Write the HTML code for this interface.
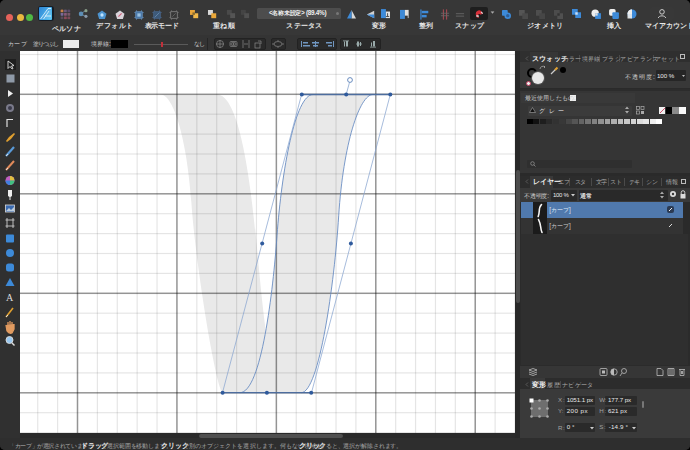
<!DOCTYPE html>
<html><head><meta charset="utf-8">
<style>
*{margin:0;padding:0;box-sizing:border-box}
html,body{width:690px;height:450px;overflow:hidden;background:#000}
body{position:relative;font-family:"Liberation Sans",sans-serif;color:#ddd}
.abs{position:absolute}
#win{position:absolute;left:0;top:0;width:690px;height:450px;background:#2d2d2d;border-radius:5px;overflow:hidden}
#tb{left:0;top:0;width:690px;height:35px;background:#373737}
#ctx{left:0;top:35px;width:690px;height:16px;background:#343434}
#lt{left:0;top:51px;width:20px;height:387px;background:#303030}
#canvas{left:20px;top:51px;width:495px;height:382px;background:#fff;overflow:hidden}
#status{left:0;top:438px;width:690px;height:12px;background:#2e2e2e}
#rp{left:515px;top:51px;width:175px;height:388px;background:#2a2a2a}
.mn{fill:rgba(0,0,0,0.1)}
.mj{fill:rgba(0,0,0,0.42)}
.sm{font-size:5.8px;color:#d8d8d8;white-space:nowrap;margin-top:1px}
.grp{background:#2a2a2a;border:0.5px solid #222;border-radius:2px}
.tab{font-size:6.2px;color:#9a9a9a;white-space:nowrap}
.fld{height:9px;background:#2a2a2a;border-radius:1px;font-size:6px;color:#e8e8e8;padding-left:2px;line-height:9px;white-space:nowrap;overflow:hidden}
.st{font-size:5.75px;color:#b0b0b0;white-space:nowrap}
.st b{color:#f0f0f0}
.ic{transform:scale(.82)}
.tx{position:absolute;line-height:1;white-space:nowrap}
.lbl{position:absolute;font-size:6.2px;font-weight:bold;color:#e8e8e8;white-space:nowrap;transform:translateX(-50%)}
</style></head><body>
<div id="win">
  <div id="tb" class="abs">
    <div class="abs" style="left:6px;top:13.5px;width:7px;height:7px;border-radius:50%;background:#e5625a"></div>
    <div class="abs" style="left:16.5px;top:13.5px;width:7px;height:7px;border-radius:50%;background:#e9b73f"></div>
    <div class="abs" style="left:26.3px;top:13.5px;width:7px;height:7px;border-radius:50%;background:#4fb845"></div>
    <div class="abs" style="left:37.5px;top:5.7px;width:16px;height:15.5px;border-radius:3px;background:#141c26"></div>
    <div class="abs" style="left:39px;top:7px;width:13.2px;height:13.2px;border-radius:1px;background:linear-gradient(120deg,#2f86d6,#56c4f2)"></div>
    <svg class="abs" style="left:39px;top:7px" width="13.2" height="13.2"><path d="M1.5,12 L9,1.5 H12 V12 Z" fill="rgba(255,255,255,0.12)"/><path d="M1.5,12 L9,1.5 M4.5,12 L10,4 M9,1.5 H12 M6,9 H12" stroke="#e8f6ff" stroke-width="0.8" fill="none"/></svg>
    <svg class="abs ic" style="left:59px;top:7.5px" width="13" height="13"><rect x="0.5" y="0.5" width="3.4" height="3.4" rx="0.6" fill="#c8804a"/><rect x="4.7" y="0.5" width="3.4" height="3.4" rx="0.6" fill="#6a5a7a"/><rect x="8.9" y="0.5" width="3.4" height="3.4" rx="0.6" fill="#5a4a6a"/><rect x="0.5" y="4.7" width="3.4" height="3.4" rx="0.6" fill="#7a6a9a"/><rect x="4.7" y="4.7" width="3.4" height="3.4" rx="0.6" fill="#8a5a7a"/><rect x="8.9" y="4.7" width="3.4" height="3.4" rx="0.6" fill="#7a5a6a"/><rect x="0.5" y="8.9" width="3.4" height="3.4" rx="0.6" fill="#5a4a5a"/><rect x="4.7" y="8.9" width="3.4" height="3.4" rx="0.6" fill="#8a4a5a"/><rect x="8.9" y="8.9" width="3.4" height="3.4" rx="0.6" fill="#7a4a5a"/></svg>
    <svg class="abs ic" style="left:77px;top:7px" width="13" height="13">
      <path d="M3,7 L9,3 M3,7 L9,10" stroke="#6a8aa0" stroke-width="1.2"/>
      <circle cx="3.5" cy="7" r="2.8" fill="#5d8eb5"/><circle cx="9.5" cy="3" r="1.9" fill="#8aa08a"/><circle cx="9.5" cy="10" r="1.9" fill="#8a9aaa"/>
    </svg>
    <svg class="abs ic" style="left:96px;top:9px" width="12" height="12">
      <path d="M6,0.5 L11.5,4.5 L9.5,11 L2.5,11 L0.5,4.5 Z" fill="#4d94cf"/><circle cx="6" cy="6" r="2" fill="#bfe3ff"/>
    </svg>
    <svg class="abs ic" style="left:114px;top:9px" width="12" height="12">
      <path d="M6,0.5 L11.5,4.5 L9.5,11 L2.5,11 L0.5,4.5 Z" fill="#d9d4da"/><path d="M4,8 L8,4" stroke="#d0607a" stroke-width="1.3"/>
    </svg>
    <svg class="abs ic" style="left:133px;top:9px" width="12" height="12">
      <rect x="2" y="2" width="8" height="8" fill="#4a78a8" stroke="#6a98c8" stroke-width="0.8"/><rect x="4" y="4" width="4" height="4" fill="#9ac0e0"/><path d="M0,3 H2 M10,3 H12 M0,9 H2 M10,9 H12 M3,0 V2 M9,0 V2 M3,10 V12 M9,10 V12" stroke="#6a98c8" stroke-width="0.7"/>
    </svg>
    <svg class="abs ic" style="left:151px;top:9px" width="12" height="12">
      <rect x="2" y="2" width="8" height="8" fill="#3d5a7a" stroke="#4a6a94" stroke-width="0.8"/><path d="M3,9 L9,3" stroke="#6a8ab0" stroke-width="1"/><path d="M0,3 H2 M10,3 H12 M0,9 H2 M10,9 H12 M3,0 V2 M9,0 V2 M3,10 V12 M9,10 V12" stroke="#4a6a94" stroke-width="0.7"/>
    </svg>
    <svg class="abs ic" style="left:168px;top:9px" width="12" height="12">
      <rect x="2" y="2" width="8" height="8" fill="none" stroke="#8a8a8a" stroke-width="0.9"/><path d="M0,3 H2 M10,3 H12 M0,9 H2 M10,9 H12 M3,0 V2 M9,0 V2 M3,10 V12 M9,10 V12" stroke="#777" stroke-width="0.7"/><path d="M4,8 L8,4" stroke="#777" stroke-width="0.8"/>
    </svg>
    <svg class="abs ic" style="left:188px;top:8px" width="13" height="13">
      <rect x="1" y="1" width="6" height="6" fill="#e9a53a"/><rect x="5" y="5" width="6" height="6" fill="#f0b84a"/><rect x="4" y="4" width="3" height="3" fill="#8a6a2a"/>
    </svg>
    <svg class="abs ic" style="left:206px;top:8px" width="13" height="13">
      <rect x="1" y="1" width="6" height="6" fill="#d8d8d8"/><rect x="5" y="5" width="6" height="6" fill="#eaa83a"/>
    </svg>
    <svg class="abs ic" style="left:225px;top:8px" width="12" height="12">
      <rect x="1" y="1" width="6" height="6" fill="#4a4a4a"/><rect x="5" y="5" width="6" height="6" fill="#555"/>
    </svg>
    <svg class="abs ic" style="left:239px;top:8px" width="12" height="12">
      <rect x="1" y="1" width="6" height="6" fill="#444"/><rect x="5" y="5" width="6" height="6" fill="#505050"/>
    </svg>
    <div class="abs" style="left:256.5px;top:7.6px;width:84px;height:11.6px;border-radius:1.5px;background:#4d4d4d"></div>
    <div class="abs" style="left:336px;top:12px;width:3px;height:3px;border-radius:50%;background:#777"></div>
    <svg class="abs ic" style="left:345px;top:8px" width="13" height="13"><path d="M6.5,1 L12,11.5 L6.5,11.5 Z" fill="#d8d8d8"/><path d="M6.5,1 L1,11.5 L6.5,11.5 Z" fill="#3d8ad8"/></svg>
    <svg class="abs ic" style="left:364px;top:8px" width="13" height="13"><path d="M11,2 L2,6.5 L11,11 Z" fill="#d0d0d0"/><path d="M11,6.5 L2,6.5 L11,11 Z" fill="#3d8ad8"/></svg>
    <svg class="abs ic" style="left:379px;top:7px" width="13" height="14"><rect x="1" y="1" width="6" height="11" fill="#3d8ad8"/><rect x="7" y="4" width="5" height="8" fill="#e0e0e0"/><path d="M9,6 v4 M7,10 h4" stroke="#333" stroke-width="1"/></svg>
    <svg class="abs ic" style="left:398px;top:7px" width="13" height="14"><rect x="1" y="2" width="6" height="11" fill="#3d8ad8"/><rect x="7" y="2" width="4" height="7" fill="#e0e0e0"/><path d="M11,2 V12" stroke="#ddd" stroke-width="1"/></svg>
    <svg class="abs ic" style="left:419px;top:8px" width="12" height="13"><path d="M1,0 V13" stroke="#3d8ad8" stroke-width="1.5"/><rect x="2" y="2" width="8" height="3" fill="#3d8ad8"/><rect x="2" y="7" width="6" height="3" fill="#3d8ad8"/></svg>
    <svg class="abs ic" style="left:439px;top:8px" width="12" height="13"><path d="M4,0 V13 M8,0 V13" stroke="#b04a55" stroke-width="1.2"/><path d="M1,5 H11 M1,8 H11" stroke="#6a6a6a" stroke-width="1"/></svg>
    <svg class="abs ic" style="left:454px;top:8px" width="12" height="13"><path d="M1,5.5 H11 M1,8.5 H11" stroke="#6a6a6a" stroke-width="1"/></svg>
    <div class="abs" style="left:470px;top:7px;width:18px;height:13px;border-radius:2px;background:#1e1e1e"></div>
    <svg class="abs ic" style="left:473px;top:8px" width="12" height="12"><path d="M3,10 L2,6 A4,4 0 0 1 9,3 L11,5 L8,7 A1.5,1.5 0 0 0 5,8 L6,11 Z" fill="#d6303a"/><path d="M9,3 L11,5 L10,6 L8,4 Z M2.5,7.5 L5.5,7.5 L6,9.5 L3,9.5 Z" fill="#ddd"/></svg>
    <svg class="abs ic" style="left:490px;top:11px" width="5" height="4"><path d="M0,0 H5 L2.5,3 Z" fill="#aaa"/></svg>
    <svg class="abs ic" style="left:500px;top:8px" width="13" height="13"><rect x="1" y="1" width="7" height="7" rx="1" fill="#3d8ad8"/><circle cx="8" cy="8" r="4" fill="#3d8ad8"/><circle cx="8" cy="8" r="2" fill="#2c5f9a"/></svg>
    <svg class="abs ic" style="left:516.5px;top:7.5px" width="13" height="13"><rect x="1" y="1" width="7" height="7" fill="#555"/><rect x="5" y="5" width="7" height="7" fill="#4a4a4a"/></svg>
    <svg class="abs ic" style="left:533.5px;top:7.5px" width="13" height="13"><rect x="1" y="1" width="7" height="7" fill="#4e4e4e"/><rect x="5" y="5" width="7" height="7" fill="#464646"/></svg>
    <svg class="abs ic" style="left:551.5px;top:7.5px" width="13" height="13"><rect x="1" y="1" width="7" height="7" fill="#4c4c4c"/><rect x="5" y="5" width="7" height="7" fill="#505050"/><rect x="5" y="5" width="3" height="3" fill="#333"/></svg>
    
    <svg class="abs ic" style="left:570px;top:7px" width="13" height="13"><rect x="1" y="1" width="7" height="7" fill="#3d8ad8"/><rect x="5" y="5" width="7" height="7" fill="#3d8ad8"/><rect x="5" y="5" width="3" height="3" fill="#c8e0f8"/></svg>
    <svg class="abs ic" style="left:589px;top:7px" width="14" height="14"><circle cx="6" cy="6" r="4.5" fill="#eee"/><rect x="6" y="6" width="7" height="7" fill="#3d8ad8"/><rect x="6" y="6" width="3" height="3" fill="#ddd"/></svg>
    <svg class="abs ic" style="left:607px;top:7px" width="14" height="14"><rect x="1" y="1" width="8" height="8" rx="2" fill="#eee"/><rect x="5" y="5" width="8" height="8" rx="1" fill="#3d8ad8"/></svg>
    <svg class="abs ic" style="left:625px;top:7px" width="14" height="14"><circle cx="7" cy="7" r="5.5" fill="#3d8ad8"/><path d="M7,7 V1.5 A5.5,5.5 0 0 0 1.5,7 Z" fill="#eee"/><path d="M7,1.5 A5.5,5.5 0 0 0 1.5,7 L1.5,12.5 L7,12.5 Z" fill="#eee" opacity="0.9"/></svg>
    <div class="abs" style="left:650px;top:7px;width:24px;height:13px;border-radius:2px;background:#383838"></div>
    <svg class="abs ic" style="left:656px;top:7px" width="12" height="13"><circle cx="6" cy="4.5" r="2.8" fill="none" stroke="#ddd" stroke-width="1.1"/><path d="M1.5,12 C2,8.5 10,8.5 10.5,12" fill="none" stroke="#ddd" stroke-width="1.1"/></svg>
  </div>
  <div id="ctx" class="abs">
    <div class="abs" style="left:62.5px;top:4.8px;width:16.5px;height:8px;background:#ececec"></div>
    <div class="abs" style="left:111px;top:4.8px;width:16.5px;height:8px;background:#000"></div>
    <div class="abs" style="left:133.5px;top:8.8px;width:54.5px;height:1px;background:#5a5a5a"></div>
    <div class="abs" style="left:161px;top:6.8px;width:1.5px;height:5px;background:#c0303a"></div>
    <div class="abs" style="left:207px;top:3.3px;width:1px;height:12px;background:#262626"></div>
    <div class="abs grp" style="left:214px;top:3.3px;width:52px;height:12px"></div>
    <div class="abs grp" style="left:271px;top:3.3px;width:15px;height:12px"></div>
    <div class="abs grp" style="left:297px;top:3.3px;width:40px;height:12px"></div>
    <div class="abs grp" style="left:340px;top:3.3px;width:41px;height:12px"></div>
    <svg class="abs" style="left:214px;top:3.3px" width="170" height="12">
      <g stroke="#8a8a8a" fill="none" stroke-width="0.7">
        <circle cx="6" cy="6" r="3.5"/><path d="M2,6 H10 M6,2 V10"/>
        <rect x="16" y="3.5" width="7" height="5" rx="1"/><circle cx="18.5" cy="6" r="1.5"/><circle cx="20.5" cy="6" r="1.5"/>
        <path d="M29,2 V10 M35,2 V10 M30,6 L34,6"/>
        <rect x="41" y="5" width="5" height="5"/><path d="M44,3 L47,3 L47,6"/>
        <ellipse cx="64" cy="6" rx="4" ry="2.5"/><path d="M58,6 h2 M68,6 h2 M64,2 v1 M64,9 v1"/>
      </g>
      <g fill="#7096c0">
        <rect x="87" y="3" width="1" height="6"/><rect x="89" y="4" width="5" height="1.5"/><rect x="89" y="7" width="7" height="1.5"/>
        <rect x="101" y="3" width="1" height="6"/><rect x="98" y="4" width="7" height="1.5"/><rect x="99" y="7" width="5" height="1.5"/>
        <rect x="119" y="3" width="1" height="6"/><rect x="112" y="4" width="6" height="1.5"/><rect x="114" y="7" width="4" height="1.5"/>
      </g>
      <g fill="#9aa">
        <rect x="130" y="3.5" width="1" height="5"/><rect x="132" y="3" width="2" height="5.5"/><rect x="129" y="2.5" width="6" height="0.8"/>
        <rect x="143" y="3.5" width="2" height="5"/><rect x="146" y="4" width="1" height="4"/><rect x="142" y="5.6" width="6" height="0.8"/>
        <rect x="157" y="4.5" width="1" height="4"/><rect x="159" y="3" width="2" height="5.5"/><rect x="156" y="8.7" width="6" height="0.8"/>
      </g>
    </svg>
  </div>
  <div id="lt" class="abs">
    <div class="abs" style="left:5px;top:8px;width:11px;height:11px;background:#1e1e1e"></div>
    <svg class="abs" style="left:0;top:0" width="20" height="387">
      <path d="M8,10 L8,17.5 L10,15.5 L12,18 L13,17.5 L11.5,15 L14,14.5 Z" fill="none" stroke="#ddd" stroke-width="0.9"/>
      <rect x="6.5" y="23.5" width="8" height="8" fill="#8f9aa8"/>
      <path d="M8,39 L8,46 L13,42.5 Z" fill="#eee"/>
      <circle cx="10" cy="57" r="4" fill="#7a7a8a"/><circle cx="10" cy="57" r="2" fill="#3a3a4a"/>
      <path d="M7,76 V68.5 H13" fill="none" stroke="#ddd" stroke-width="1.2"/>
      <path d="M6,90 L9,86 L14,82 L15,83 L11,88 L7,91 Z" fill="#e0a030"/>
      <path d="M6,105 L14,96" stroke="#5a9ad8" stroke-width="2.2"/><path d="M6,105 L8,103" stroke="#ddd" stroke-width="1"/>
      <path d="M6,119 L14,110" stroke="#e08a5a" stroke-width="2"/><path d="M6,119 L8,117" stroke="#ddd" stroke-width="1"/>
      <circle cx="10" cy="129.5" r="4.5" fill="#c060c0"/><path d="M10,129.5 L10,125 A4.5,4.5 0 0 1 14.5,129.5 Z" fill="#e0c040"/><path d="M10,129.5 L14.5,129.5 A4.5,4.5 0 0 1 10,134 Z" fill="#40c080"/><path d="M10,129.5 L10,134 A4.5,4.5 0 0 1 5.5,129.5 Z" fill="#4080e0"/>
      <path d="M8,139 H12 V145 L10.5,146 V149 H9.5 V146 L8,145 Z" fill="#eee"/>
      <rect x="5.5" y="154" width="9" height="7" fill="#3a6ab0" stroke="#ddd" stroke-width="0.8"/><path d="M6,160 L9,157 L11,159 L14,156 V160 Z" fill="#bcd"/>
      <path d="M7,167 V177 M13,167 V177 M5.5,169 H14.5 M5.5,175 H14.5" stroke="#ccc" stroke-width="0.9"/>
      <rect x="6" y="183.5" width="8" height="8" rx="1" fill="#3d8ad8"/>
      <circle cx="10" cy="202" r="4" fill="#3d8ad8"/>
      <rect x="6" y="212.5" width="8" height="8" rx="2.5" fill="#3d8ad8"/>
      <path d="M10,227 L14.5,235 H5.5 Z" fill="#3d8ad8"/>
      <text x="6" y="250" font-family="Liberation Serif" font-size="10" fill="#ddd">A</text>
      <path d="M6,266 L13,257" stroke="#e0a030" stroke-width="1.6"/><path d="M6,266 L8,264" stroke="#ddd" stroke-width="1"/>
      <path d="M6,274 L7,280 Q9,283 12,282 L14,278 L14,273 M8,276 V271 M10,276 V270 M12,276 V271" fill="#e09a60" stroke="#e09a60" stroke-width="1.3"/>
      <circle cx="9.5" cy="289" r="3.5" fill="#9ac8f0" stroke="#ddd" stroke-width="0.9"/><path d="M12,292 L14.5,294.5" stroke="#ddd" stroke-width="1.4"/>
    </svg>
  </div>
  <div id="canvas" class="abs">
    <svg width="495" height="382" viewBox="20 51 495 382" style="position:absolute;left:0;top:0">
      <g id="shapes" fill="#e9e9e9">
        <path d="M160.6,94.5 C174.1,94.5 187.3,142.3 191.3,201.5 C195.8,267.8 216.8,392.7 223.0,392.7 L285.0,392.7 C269.7,392.7 261.7,297.8 256.8,245.4 C251.2,186.4 240.2,94.5 217.0,94.5 Z"/>
        <path d="M313.0,94.5 C295.3,94.5 281.7,170.4 277.0,235.8 C273.1,289.8 261.6,392.7 239.8,392.7 L301.2,392.7 C319.2,392.7 334.4,283.8 338.7,215.8 C343.3,143.7 359.5,94.5 373.0,94.5 Z"/>
      </g>
      <g id="grid">
<rect x="37.13" y="51" width="1.2" height="382" class="mn"/>
<rect x="57.01" y="51" width="1.2" height="382" class="mn"/>
<rect x="76.75" y="51" width="1.5" height="382" class="mj"/>
<rect x="96.79" y="51" width="1.2" height="382" class="mn"/>
<rect x="116.67" y="51" width="1.2" height="382" class="mn"/>
<rect x="136.56" y="51" width="1.2" height="382" class="mn"/>
<rect x="156.44" y="51" width="1.2" height="382" class="mn"/>
<rect x="176.18" y="51" width="1.5" height="382" class="mj"/>
<rect x="196.22" y="51" width="1.2" height="382" class="mn"/>
<rect x="216.10" y="51" width="1.2" height="382" class="mn"/>
<rect x="235.99" y="51" width="1.2" height="382" class="mn"/>
<rect x="255.87" y="51" width="1.2" height="382" class="mn"/>
<rect x="275.61" y="51" width="1.5" height="382" class="mj"/>
<rect x="295.65" y="51" width="1.2" height="382" class="mn"/>
<rect x="315.53" y="51" width="1.2" height="382" class="mn"/>
<rect x="335.42" y="51" width="1.2" height="382" class="mn"/>
<rect x="355.30" y="51" width="1.2" height="382" class="mn"/>
<rect x="375.04" y="51" width="1.5" height="382" class="mj"/>
<rect x="395.08" y="51" width="1.2" height="382" class="mn"/>
<rect x="414.96" y="51" width="1.2" height="382" class="mn"/>
<rect x="434.85" y="51" width="1.2" height="382" class="mn"/>
<rect x="454.73" y="51" width="1.2" height="382" class="mn"/>
<rect x="474.47" y="51" width="1.5" height="382" class="mj"/>
<rect x="494.51" y="51" width="1.2" height="382" class="mn"/>
<rect x="514.39" y="51" width="1.2" height="382" class="mn"/>
<rect x="20" y="53.90" width="495" height="1.2" class="mn"/>
<rect x="20" y="73.80" width="495" height="1.2" class="mn"/>
<rect x="20" y="93.55" width="495" height="1.5" class="mj"/>
<rect x="20" y="113.60" width="495" height="1.2" class="mn"/>
<rect x="20" y="133.50" width="495" height="1.2" class="mn"/>
<rect x="20" y="153.40" width="495" height="1.2" class="mn"/>
<rect x="20" y="173.30" width="495" height="1.2" class="mn"/>
<rect x="20" y="193.05" width="495" height="1.5" class="mj"/>
<rect x="20" y="213.10" width="495" height="1.2" class="mn"/>
<rect x="20" y="233.00" width="495" height="1.2" class="mn"/>
<rect x="20" y="252.90" width="495" height="1.2" class="mn"/>
<rect x="20" y="272.80" width="495" height="1.2" class="mn"/>
<rect x="20" y="292.55" width="495" height="1.5" class="mj"/>
<rect x="20" y="312.60" width="495" height="1.2" class="mn"/>
<rect x="20" y="332.50" width="495" height="1.2" class="mn"/>
<rect x="20" y="352.40" width="495" height="1.2" class="mn"/>
<rect x="20" y="372.30" width="495" height="1.2" class="mn"/>
<rect x="20" y="392.05" width="495" height="1.5" class="mj"/>
<rect x="20" y="412.10" width="495" height="1.2" class="mn"/>
<rect x="20" y="432.00" width="495" height="1.2" class="mn"/>
</g>
      <g id="sel" fill="none" stroke="#6288c0" stroke-width="0.85">
        <path d="M313.0,94.5 C295.3,94.5 281.7,170.4 277.0,235.8 C273.1,289.8 261.6,392.7 239.8,392.7 M373.0,94.5 C359.5,94.5 343.3,143.7 338.7,215.8 C334.4,283.8 319.2,392.7 301.2,392.7"/>
        <path d="M301.6,94.5 L390.3,94.5 L311.5,392.7 L222.5,392.7 Z" stroke-width="0.75" stroke="#8aa6d0"/>
        <path d="M222.5,392.7 H311.5 M301.6,94.5 H390.3" stroke-width="1.3" stroke="#4d6d9e"/>
        <path d="M346.2,94.5 L349.5,82.4" stroke-width="0.6"/>
        <circle cx="350" cy="80" r="2.4" fill="#fff" stroke="#5a80b8" stroke-width="0.9"/>
      </g>
      <g fill="#2f5a9c">
        <circle cx="301.8" cy="94.5" r="2"/>
        <circle cx="346.2" cy="94.5" r="2"/>
        <circle cx="390.3" cy="94.5" r="2"/>
        <circle cx="262.2" cy="243.6" r="2"/>
        <circle cx="350.9" cy="243.6" r="2"/>
        <circle cx="222.6" cy="392.7" r="2"/>
        <circle cx="266.9" cy="392.7" r="2"/>
        <circle cx="311.2" cy="392.7" r="2"/>
      </g>
    </svg>
  </div>
  <div id="rp" class="abs">
    <div class="abs" style="left:0;top:0;width:5px;height:388px;background:#282828"></div>
    <div class="abs" style="left:0.6px;top:119px;width:4.2px;height:133px;background:#4c4c4c;border-radius:2px"></div>
    <!-- swatches tabs -->
    <div class="abs" style="left:5px;top:0;width:170px;height:11.2px;background:#2f2f2f"></div>
    <svg class="abs" style="left:9.5px;top:4.5px" width="4" height="5"><path d="M3,0.5 L1,2.5 L3,4.5" fill="none" stroke="#666" stroke-width="0.8"/></svg><div class="abs" style="left:64.0px;top:3.5px;width:0.7px;height:7px;background:#4a4a4a"></div><div class="abs" style="left:84.0px;top:3.5px;width:0.7px;height:7px;background:#4a4a4a"></div><div class="abs" style="left:103.5px;top:3.5px;width:0.7px;height:7px;background:#4a4a4a"></div><div class="abs" style="left:138.0px;top:3.5px;width:0.7px;height:7px;background:#4a4a4a"></div>
    <div class="abs" style="left:15px;top:1px;width:28px;height:10px;background:#363636"></div>
    <div class="abs" style="left:165px;top:3px;width:5px;height:5px;border:1px solid #bbb"></div>
    <!-- swatches content -->
    <div class="abs" style="left:5px;top:11.2px;width:170px;height:26.3px;background:#383838"></div>
    <div class="abs" style="left:12px;top:17px;width:10px;height:10px;border-radius:50%;border:2.2px solid #000"></div>
    <div class="abs" style="left:17px;top:21px;width:12px;height:12px;border-radius:50%;background:#e8e8e8;box-shadow:0 0 0 1px #555"></div>
    <div class="abs" style="left:10.5px;top:29.5px;width:5px;height:5px;border-radius:50%;background:#f0f0f0;border:0.8px solid #c04060"></div>
    <svg class="abs" style="left:24px;top:14px" width="8" height="8"><path d="M1,4 A3,3 0 0 1 6,2 M5,1 L6,2 L5,3" fill="none" stroke="#aaa" stroke-width="0.8"/></svg>
    <svg class="abs" style="left:35px;top:15px" width="9" height="9"><path d="M1,8 L6,3" stroke="#ccc" stroke-width="1.2"/><path d="M5,4 L7.5,1.5" stroke="#e0a030" stroke-width="2"/></svg>
    <div class="abs" style="left:44.5px;top:16px;width:6px;height:6px;border-radius:50%;background:#000"></div>
    <div class="abs" style="left:141px;top:19px;width:30px;height:10.5px;background:#262626;border-radius:1px"></div>
    <svg class="abs" style="left:166.5px;top:23.5px" width="3" height="3"><path d="M0,0 H3 L1.5,2 Z" fill="#bbb"/></svg>
    <!-- recent section -->
    <div class="abs" style="left:5px;top:37.5px;width:170px;height:2.5px;background:#2c2c2c"></div>
    <div class="abs" style="left:5px;top:40px;width:170px;height:82px;background:#353535"></div>
    <div class="abs" style="left:6px;top:42px;width:114px;height:10px;background:#393939"></div>
    <div class="abs" style="left:54.5px;top:44px;width:6px;height:6px;background:#eee"></div>
    <div class="abs" style="left:13px;top:54.5px;width:104px;height:10px;background:#3b3b3b;border-radius:1px"></div>
    <svg class="abs" style="left:14px;top:56px" width="7" height="6"><path d="M3.5,0.5 L6.5,5.5 H0.5 Z" fill="#111" stroke="#aaa" stroke-width="0.6"/></svg>
    <svg class="abs" style="left:110px;top:55px" width="4" height="8"><path d="M0,3 L2,0.5 L4,3 Z M0,5 L2,7.5 L4,5 Z" fill="#aaa"/></svg>
    <svg class="abs" style="left:121px;top:55px" width="9" height="9"><rect x="0.5" y="0.5" width="3" height="3" fill="none" stroke="#aaa" stroke-width="0.7"/><rect x="5" y="0.5" width="3" height="3" fill="none" stroke="#aaa" stroke-width="0.7"/><rect x="0.5" y="5" width="3" height="3" fill="none" stroke="#aaa" stroke-width="0.7"/><rect x="5" y="5" width="3" height="3" fill="#aaa"/></svg>
    <div class="abs" style="left:143.5px;top:55.5px;width:6.5px;height:7px;background:#f0f0f0"></div>
    <svg class="abs" style="left:143.5px;top:55.5px" width="7" height="7"><path d="M1,6 L6,1" stroke="#d04060" stroke-width="0.9"/></svg>
    <div class="abs" style="left:150.5px;top:55.5px;width:6.5px;height:7px;background:#000"></div>
    <div class="abs" style="left:157px;top:55.5px;width:7px;height:7px;background:#8a8a8a"></div>
    <div class="abs" style="left:164px;top:55.5px;width:7px;height:7px;background:#fafafa"></div>
    
    <div class="abs" style="left:12.00px;top:67.6px;width:5.7px;height:5.7px;background:rgb(0,0,0)"></div><div class="abs" style="left:18.47px;top:67.6px;width:5.7px;height:5.7px;background:rgb(17,17,17)"></div><div class="abs" style="left:24.94px;top:67.6px;width:5.7px;height:5.7px;background:rgb(30,30,30)"></div><div class="abs" style="left:31.41px;top:67.6px;width:5.7px;height:5.7px;background:rgb(42,42,42)"></div><div class="abs" style="left:37.88px;top:67.6px;width:5.7px;height:5.7px;background:rgb(50,50,50)"></div><div class="abs" style="left:44.35px;top:67.6px;width:5.7px;height:5.7px;background:rgb(56,56,56)"></div><div class="abs" style="left:50.82px;top:67.6px;width:5.7px;height:5.7px;background:rgb(70,70,70)"></div><div class="abs" style="left:57.29px;top:67.6px;width:5.7px;height:5.7px;background:rgb(85,85,85)"></div><div class="abs" style="left:63.76px;top:67.6px;width:5.7px;height:5.7px;background:rgb(100,100,100)"></div><div class="abs" style="left:70.23px;top:67.6px;width:5.7px;height:5.7px;background:rgb(115,115,115)"></div><div class="abs" style="left:76.70px;top:67.6px;width:5.7px;height:5.7px;background:rgb(130,130,130)"></div><div class="abs" style="left:83.17px;top:67.6px;width:5.7px;height:5.7px;background:rgb(145,145,145)"></div><div class="abs" style="left:89.64px;top:67.6px;width:5.7px;height:5.7px;background:rgb(160,160,160)"></div><div class="abs" style="left:96.11px;top:67.6px;width:5.7px;height:5.7px;background:rgb(175,175,175)"></div><div class="abs" style="left:102.58px;top:67.6px;width:5.7px;height:5.7px;background:rgb(190,190,190)"></div><div class="abs" style="left:109.05px;top:67.6px;width:5.7px;height:5.7px;background:rgb(200,200,200)"></div><div class="abs" style="left:115.52px;top:67.6px;width:5.7px;height:5.7px;background:rgb(210,210,210)"></div><div class="abs" style="left:121.99px;top:67.6px;width:5.7px;height:5.7px;background:rgb(220,220,220)"></div><div class="abs" style="left:128.46px;top:67.6px;width:5.7px;height:5.7px;background:rgb(230,230,230)"></div><div class="abs" style="left:134.93px;top:67.6px;width:5.7px;height:5.7px;background:rgb(240,240,240)"></div><div class="abs" style="left:141.40px;top:67.6px;width:5.7px;height:5.7px;background:rgb(255,255,255)"></div>
    <div class="abs" style="left:12px;top:109px;width:105px;height:8px;background:#2f2f2f;border-radius:1px"></div>
    <svg class="abs" style="left:15px;top:110px" width="6" height="6"><circle cx="2.5" cy="2.5" r="1.8" fill="none" stroke="#999" stroke-width="0.7"/><path d="M3.8,3.8 L5.5,5.5" stroke="#999" stroke-width="0.7"/></svg>
    <!-- layers tabs -->
    <div class="abs" style="left:5px;top:122px;width:170px;height:3px;background:#2a2a2a"></div>
    <div class="abs" style="left:5px;top:125px;width:170px;height:12px;background:#2c2c2c"></div>
    <svg class="abs" style="left:9.5px;top:128px" width="4" height="5"><path d="M3,0.5 L1,2.5 L3,4.5" fill="none" stroke="#666" stroke-width="0.8"/></svg><div class="abs" style="left:54.0px;top:126.5px;width:0.7px;height:8px;background:#4a4a4a"></div><div class="abs" style="left:75.5px;top:126.5px;width:0.7px;height:8px;background:#4a4a4a"></div><div class="abs" style="left:93.0px;top:126.5px;width:0.7px;height:8px;background:#4a4a4a"></div><div class="abs" style="left:109.0px;top:126.5px;width:0.7px;height:8px;background:#4a4a4a"></div><div class="abs" style="left:126.8px;top:126.5px;width:0.7px;height:8px;background:#4a4a4a"></div><div class="abs" style="left:146.4px;top:126.5px;width:0.7px;height:8px;background:#4a4a4a"></div>
    <div class="abs" style="left:15px;top:125px;width:22.5px;height:12px;background:#393939"></div>
    <div class="abs" style="left:166px;top:128px;width:5px;height:5px;border:1px solid #bbb"></div>
    <!-- opacity row -->
    <div class="abs" style="left:5px;top:137px;width:170px;height:14px;background:#393939"></div>
    <div class="abs" style="left:35.5px;top:138.5px;width:26.5px;height:11px;background:#292929;border-radius:1px"></div>
    <svg class="abs" style="left:56px;top:143px" width="4" height="3"><path d="M0,0 H4 L2,2.5 Z" fill="#ccc"/></svg>
    <div class="abs" style="left:63.5px;top:138.5px;width:89px;height:11px;background:#292929;border-radius:1px"></div>
    <svg class="abs" style="left:145px;top:140px" width="4" height="8"><path d="M0,3 L2,0.5 L4,3 Z M0,5 L2,7.5 L4,5 Z" fill="#aaa"/></svg>
    <svg class="abs" style="left:154px;top:139px" width="8" height="8"><circle cx="4" cy="4" r="3" fill="#ddd"/><circle cx="4" cy="4" r="1.2" fill="#393939"/></svg>
    <svg class="abs" style="left:164.5px;top:138.5px" width="6" height="9"><path d="M1.2,4 V2.5 A1.8,1.8 0 0 1 4.8,2.5 V4" fill="none" stroke="#ddd" stroke-width="0.9"/><rect x="0.5" y="4" width="5" height="4.5" fill="#ddd"/></svg>
    <!-- layer rows -->
    <div class="abs" style="left:6px;top:151px;width:162px;height:16px;background:#5079ad"></div>
    <div class="abs" style="left:17.5px;top:151px;width:14px;height:16px;background:#1b1b1b"></div>
    <svg class="abs" style="left:17.5px;top:151px" width="14" height="16"><path d="M8.5,2.5 C7,4 6.3,7 6.2,9.5 C6.1,11.5 5.8,13 5.2,14.5" fill="none" stroke="#f4f4f4" stroke-width="1.6" stroke-linecap="round"/></svg>
    <div class="abs" style="left:152px;top:155px;width:7px;height:7px;border-radius:2px;background:#2b3a52"></div>
    <svg class="abs" style="left:152px;top:155px" width="7" height="7"><path d="M2,5 L5,2" stroke="#eee" stroke-width="1"/></svg>
    <div class="abs" style="left:6px;top:167px;width:162px;height:16px;background:#333333"></div>
    <div class="abs" style="left:17.5px;top:167px;width:14px;height:16px;background:#1b1b1b"></div>
    <svg class="abs" style="left:17.5px;top:167px" width="14" height="16"><path d="M5.5,1.5 C6.5,3.5 7.3,6 7.6,8.5 C7.9,11 8.3,13 9,14.5" fill="none" stroke="#f4f4f4" stroke-width="1.6" stroke-linecap="round"/></svg>
    <svg class="abs" style="left:152px;top:171px" width="7" height="7"><path d="M2,5 L5,2" stroke="#ddd" stroke-width="1"/></svg>
    <!-- layer list -->
    <div class="abs" style="left:5px;top:183px;width:170px;height:132px;background:#2b2b2b"></div>
    <div class="abs" style="left:6px;top:183px;width:167px;height:131px;background:#2f2f2f"></div>
    <!-- layers footer -->
    <div class="abs" style="left:5px;top:315px;width:170px;height:12px;background:#363636"></div>
    <svg class="abs" style="left:5px;top:315px" width="170" height="12">
      <g fill="none" stroke="#bbb" stroke-width="0.8">
        <path d="M9,4 L13,2.5 L17,4 L13,5.5 Z M9,6 L13,7.5 L17,6 M9,8 L13,9.5 L17,8"/>
        <rect x="80" y="2.5" width="7" height="7" rx="1"/>
        <circle cx="94" cy="6" r="3.2"/>
        <circle cx="104" cy="5" r="2.5"/><path d="M102,7 L100,10"/>
        <path d="M137,2.5 H141 L143,4.5 V9.5 H137 Z"/>
        <path d="M148,2.5 H154 V9.5 H148 Z M150,2.5 V9.5 M152,2.5 V9.5"/>
        <path d="M159,3.5 H165 M160,3.5 V9.5 H164 V3.5 M161.5,5 V8 M162.5,5 V8"/>
      </g>
      <rect x="82" y="4.5" width="3" height="3" fill="#bbb"/><path d="M94,2.8 A3.2,3.2 0 0 0 94,9.2 Z" fill="#bbb"/>
    </svg>
    <!-- transform tabs -->
    <div class="abs" style="left:5px;top:327px;width:170px;height:11px;background:#2c2c2c"></div>
    <svg class="abs" style="left:9.5px;top:331px" width="4" height="5"><path d="M3,0.5 L1,2.5 L3,4.5" fill="none" stroke="#666" stroke-width="0.8"/></svg><div class="abs" style="left:44.5px;top:329.5px;width:0.7px;height:7px;background:#4a4a4a"></div>
    <div class="abs" style="left:15px;top:327px;width:15px;height:11px;background:#3a3a3a"></div>
    <!-- transform content -->
    <div class="abs" style="left:5px;top:338px;width:170px;height:50px;background:#3a3a3a"></div>
    <div class="abs" style="left:16px;top:349px;width:17px;height:17px;background:#6e6e6e"></div>
    <svg class="abs" style="left:13px;top:346px" width="23" height="23"><g fill="#aaa"><circle cx="3.5" cy="11.5" r="1.3"/><circle cx="11.5" cy="3.5" r="1.3"/><circle cx="19.5" cy="3.5" r="1.3"/><circle cx="11.5" cy="11.5" r="1.3"/><circle cx="19.5" cy="11.5" r="1.3"/><circle cx="3.5" cy="19.5" r="1.3"/><circle cx="11.5" cy="19.5" r="1.3"/><circle cx="19.5" cy="19.5" r="1.3"/></g><rect x="1.5" y="1.5" width="4" height="4" fill="#fff"/></svg>
    <div class="abs fld" style="left:49.5px;top:344.5px;width:30.5px"></div>
    <div class="abs fld" style="left:90px;top:344.5px;width:32px"></div>
    <div class="abs fld" style="left:49.5px;top:356px;width:30.5px"></div>
    <div class="abs fld" style="left:90px;top:356px;width:32px"></div>
    <div class="abs" style="left:127px;top:350px;width:2px;height:7px;background:#777;border-radius:1px"></div>
    <div class="abs fld" style="left:49.5px;top:372px;width:30.5px"></div>
    <svg class="abs" style="left:75px;top:376px" width="4" height="3"><path d="M0,0 H4 L2,2.5 Z" fill="#ccc"/></svg>
    <div class="abs fld" style="left:90px;top:372px;width:32px"></div>
    <svg class="abs" style="left:117px;top:376px" width="4" height="3"><path d="M0,0 H4 L2,2.5 Z" fill="#ccc"/></svg>
  </div>
  <div class="abs" style="left:20px;top:433px;width:495px;height:5px;background:#2a2a2a"></div>
  <div class="abs" style="left:199px;top:434px;width:144px;height:4px;background:#4f4f4f;border-radius:2px"></div>
  <div id="status" class="abs">
  </div>
<div id="txt">
<div class="tx" style="left:52.0px;top:25.8px;font-size:6.6px;font-weight:bold;color:#e6e6e6;letter-spacing:0.17px">ペルソナ</div>
<div class="tx" style="left:96.0px;top:23.3px;font-size:6.6px;font-weight:bold;color:#e6e6e6;letter-spacing:0.50px">デフォルト</div>
<div class="tx" style="left:144.5px;top:23.3px;font-size:6.6px;font-weight:bold;color:#e6e6e6;letter-spacing:-0.12px">表示モード</div>
<div class="tx" style="left:213.0px;top:23.3px;font-size:6.6px;font-weight:bold;color:#e6e6e6;letter-spacing:0.35px">重ね順</div>
<div class="tx" style="left:286.4px;top:23.3px;font-size:6.6px;font-weight:bold;color:#e6e6e6;letter-spacing:0.15px">ステータス</div>
<div class="tx" style="left:372.0px;top:23.3px;font-size:6.6px;font-weight:bold;color:#e6e6e6;letter-spacing:0.00px">変形</div>
<div class="tx" style="left:419.0px;top:23.3px;font-size:6.6px;font-weight:bold;color:#e6e6e6;letter-spacing:0.40px">整列</div>
<div class="tx" style="left:455.0px;top:23.3px;font-size:6.6px;font-weight:bold;color:#e6e6e6;letter-spacing:0.27px">スナップ</div>
<div class="tx" style="left:527.0px;top:23.3px;font-size:6.6px;font-weight:bold;color:#e6e6e6;letter-spacing:0.25px">ジオメトリ</div>
<div class="tx" style="left:606.7px;top:23.3px;font-size:6.6px;font-weight:bold;color:#e6e6e6;letter-spacing:0.00px">挿入</div>
<div class="tx" style="left:645.0px;top:23.3px;font-size:6.6px;font-weight:bold;color:#e6e6e6;letter-spacing:0.00px">マイアカウント</div>
<div class="tx" style="left:269.0px;top:10.0px;font-size:6.4px;font-weight:bold;color:#f0f0f0;letter-spacing:-0.29px">&lt;名称未設定&gt; (89.4%)</div>
<div class="tx" style="left:7.8px;top:41.3px;font-size:6.4px;font-weight:normal;color:#cfcfcf;letter-spacing:0.40px">カーブ</div>
<div class="tx" style="left:33.0px;top:41.3px;font-size:6.4px;font-weight:normal;color:#cfcfcf;letter-spacing:-1.00px">塗りつぶし</div>
<div class="tx" style="left:91.3px;top:41.3px;font-size:6.4px;font-weight:normal;color:#cfcfcf;letter-spacing:-0.10px">境界線:</div>
<div class="tx" style="left:193.7px;top:41.3px;font-size:6.4px;font-weight:normal;color:#cfcfcf;letter-spacing:-0.30px">なし</div>
<div class="tx" style="left:531.7px;top:55.5px;font-size:6.6px;font-weight:bold;color:#f2f2f2;letter-spacing:0.30px">スウォッチ</div>
<div class="tx" style="left:562.9px;top:55.5px;font-size:6.4px;font-weight:normal;color:#a8a8a8;letter-spacing:-0.15px">カラー</div>
<div class="tx" style="left:581.6px;top:55.5px;font-size:6.4px;font-weight:normal;color:#a8a8a8;letter-spacing:0.45px">境界線</div>
<div class="tx" style="left:601.5px;top:55.5px;font-size:6.4px;font-weight:normal;color:#a8a8a8;letter-spacing:0.50px">ブラシ</div>
<div class="tx" style="left:620.2px;top:55.5px;font-size:6.4px;font-weight:normal;color:#a8a8a8;letter-spacing:0.44px">アピアランス</div>
<div class="tx" style="left:655.0px;top:55.5px;font-size:6.4px;font-weight:normal;color:#a8a8a8;letter-spacing:0.37px">アセット</div>
<div class="tx" style="left:625.4px;top:73.5px;font-size:6.4px;font-weight:normal;color:#c8c8c8;letter-spacing:0.90px">不透明度:</div>
<div class="tx" style="left:525.0px;top:95.2px;font-size:6.4px;font-weight:normal;color:#c8c8c8;letter-spacing:0.12px">最近使用したもの:</div>
<div class="tx" style="left:539.0px;top:107.9px;font-size:6.4px;font-weight:normal;color:#dddddd;letter-spacing:3.50px">グレー</div>
<div class="tx" style="left:533.0px;top:178.7px;font-size:6.6px;font-weight:bold;color:#f2f2f2;letter-spacing:-0.03px">レイヤー</div>
<div class="tx" style="left:557.9px;top:178.7px;font-size:6.4px;font-weight:normal;color:#a8a8a8;letter-spacing:-0.30px">エフ</div>
<div class="tx" style="left:575.4px;top:178.7px;font-size:6.4px;font-weight:normal;color:#a8a8a8;letter-spacing:-1.10px">スタ</div>
<div class="tx" style="left:595.8px;top:178.7px;font-size:6.4px;font-weight:normal;color:#a8a8a8;letter-spacing:-0.80px">文字</div>
<div class="tx" style="left:610.3px;top:178.7px;font-size:6.4px;font-weight:normal;color:#a8a8a8;letter-spacing:-0.30px">スト</div>
<div class="tx" style="left:629.0px;top:178.7px;font-size:6.4px;font-weight:normal;color:#a8a8a8;letter-spacing:-1.50px">テキ</div>
<div class="tx" style="left:646.4px;top:178.7px;font-size:6.4px;font-weight:normal;color:#a8a8a8;letter-spacing:-0.20px">シン</div>
<div class="tx" style="left:666.4px;top:178.7px;font-size:6.4px;font-weight:normal;color:#a8a8a8;letter-spacing:-0.30px">情報</div>
<div class="tx" style="left:524.2px;top:192.5px;font-size:6.4px;font-weight:normal;color:#c8c8c8;letter-spacing:-0.25px">不透明度:</div>
<div class="tx" style="left:580.3px;top:192.5px;font-size:6.4px;font-weight:bold;color:#dddddd;letter-spacing:-0.30px">通常</div>
<div class="tx" style="left:549.3px;top:206.5px;font-size:6.4px;font-weight:normal;color:#dce6f4;letter-spacing:0.00px">[カーブ]</div>
<div class="tx" style="left:549.3px;top:222.5px;font-size:6.4px;font-weight:normal;color:#c8c8c8;letter-spacing:0.00px">[カーブ]</div>
<div class="tx" style="left:531.5px;top:382.1px;font-size:6.6px;font-weight:bold;color:#f2f2f2;letter-spacing:0.90px">変形</div>
<div class="tx" style="left:546.7px;top:382.1px;font-size:6.4px;font-weight:normal;color:#a8a8a8;letter-spacing:1.20px">履歴</div>
<div class="tx" style="left:562.0px;top:382.1px;font-size:6.4px;font-weight:normal;color:#a8a8a8;letter-spacing:0.32px">ナビゲータ</div>
<div class="tx" style="left:9.0px;top:442.5px;font-size:6.4px;font-weight:normal;color:#a8a8a8;letter-spacing:-0.36px">「カーブ」が選択されています。</div>
<div class="tx" style="left:81.0px;top:442.5px;font-size:6.6px;font-weight:bold;color:#f0f0f0;letter-spacing:-0.17px">ドラッグ</div>
<div class="tx" style="left:101.0px;top:442.5px;font-size:6.4px;font-weight:normal;color:#a8a8a8;letter-spacing:-0.09px">で選択範囲を移動します。</div>
<div class="tx" style="left:161.0px;top:442.5px;font-size:6.6px;font-weight:bold;color:#f0f0f0;letter-spacing:0.00px">クリック</div>
<div class="tx" style="left:183.0px;top:442.5px;font-size:6.4px;font-weight:normal;color:#a8a8a8;letter-spacing:0.05px">で別のオブジェクトを選択します。何もない領域を</div>
<div class="tx" style="left:299.3px;top:442.5px;font-size:6.6px;font-weight:bold;color:#f0f0f0;letter-spacing:-0.27px">クリック</div>
<div class="tx" style="left:320.0px;top:442.5px;font-size:6.4px;font-weight:normal;color:#a8a8a8;letter-spacing:-0.13px">すると、選択が解除されます。</div>
<div class="tx" style="left:657.0px;top:72.5px;font-size:6.2px;font-weight:normal;color:#e8e8e8;letter-spacing:-0.10px">100 %</div>
<div class="tx" style="left:552.9px;top:192.0px;font-size:6.0px;font-weight:normal;color:#e8e8e8;letter-spacing:-0.25px">100 %</div>
<div class="tx" style="left:558.0px;top:397.1px;font-size:6.2px;font-weight:normal;color:#a0a0a0;letter-spacing:0.80px">X:</div>
<div class="tx" style="left:566.7px;top:397.1px;font-size:6.2px;font-weight:normal;color:#e8e8e8;letter-spacing:-0.10px">1051.1 px</div>
<div class="tx" style="left:599.3px;top:397.1px;font-size:6.2px;font-weight:normal;color:#a0a0a0;letter-spacing:-0.50px">W:</div>
<div class="tx" style="left:608.0px;top:397.1px;font-size:6.2px;font-weight:normal;color:#e8e8e8;letter-spacing:-0.09px">177.7 px</div>
<div class="tx" style="left:558.0px;top:408.0px;font-size:6.2px;font-weight:normal;color:#a0a0a0;letter-spacing:0.00px">Y:</div>
<div class="tx" style="left:566.7px;top:407.5px;font-size:6.2px;font-weight:normal;color:#e8e8e8;letter-spacing:0.46px">200 px</div>
<div class="tx" style="left:599.3px;top:408.0px;font-size:6.2px;font-weight:normal;color:#a0a0a0;letter-spacing:0.70px">H:</div>
<div class="tx" style="left:608.0px;top:407.5px;font-size:6.2px;font-weight:normal;color:#e8e8e8;letter-spacing:0.08px">621 px</div>
<div class="tx" style="left:558.0px;top:424.5px;font-size:6.2px;font-weight:normal;color:#a0a0a0;letter-spacing:0.50px">R:</div>
<div class="tx" style="left:566.7px;top:424.0px;font-size:6.2px;font-weight:normal;color:#e8e8e8;letter-spacing:0.10px">0 °</div>
<div class="tx" style="left:599.3px;top:424.0px;font-size:6.2px;font-weight:normal;color:#a0a0a0;letter-spacing:0.70px">S:</div>
<div class="tx" style="left:608.7px;top:424.0px;font-size:6.2px;font-weight:normal;color:#e8e8e8;letter-spacing:0.18px">-14.9 °</div>
</div>
</div>
</body></html>
